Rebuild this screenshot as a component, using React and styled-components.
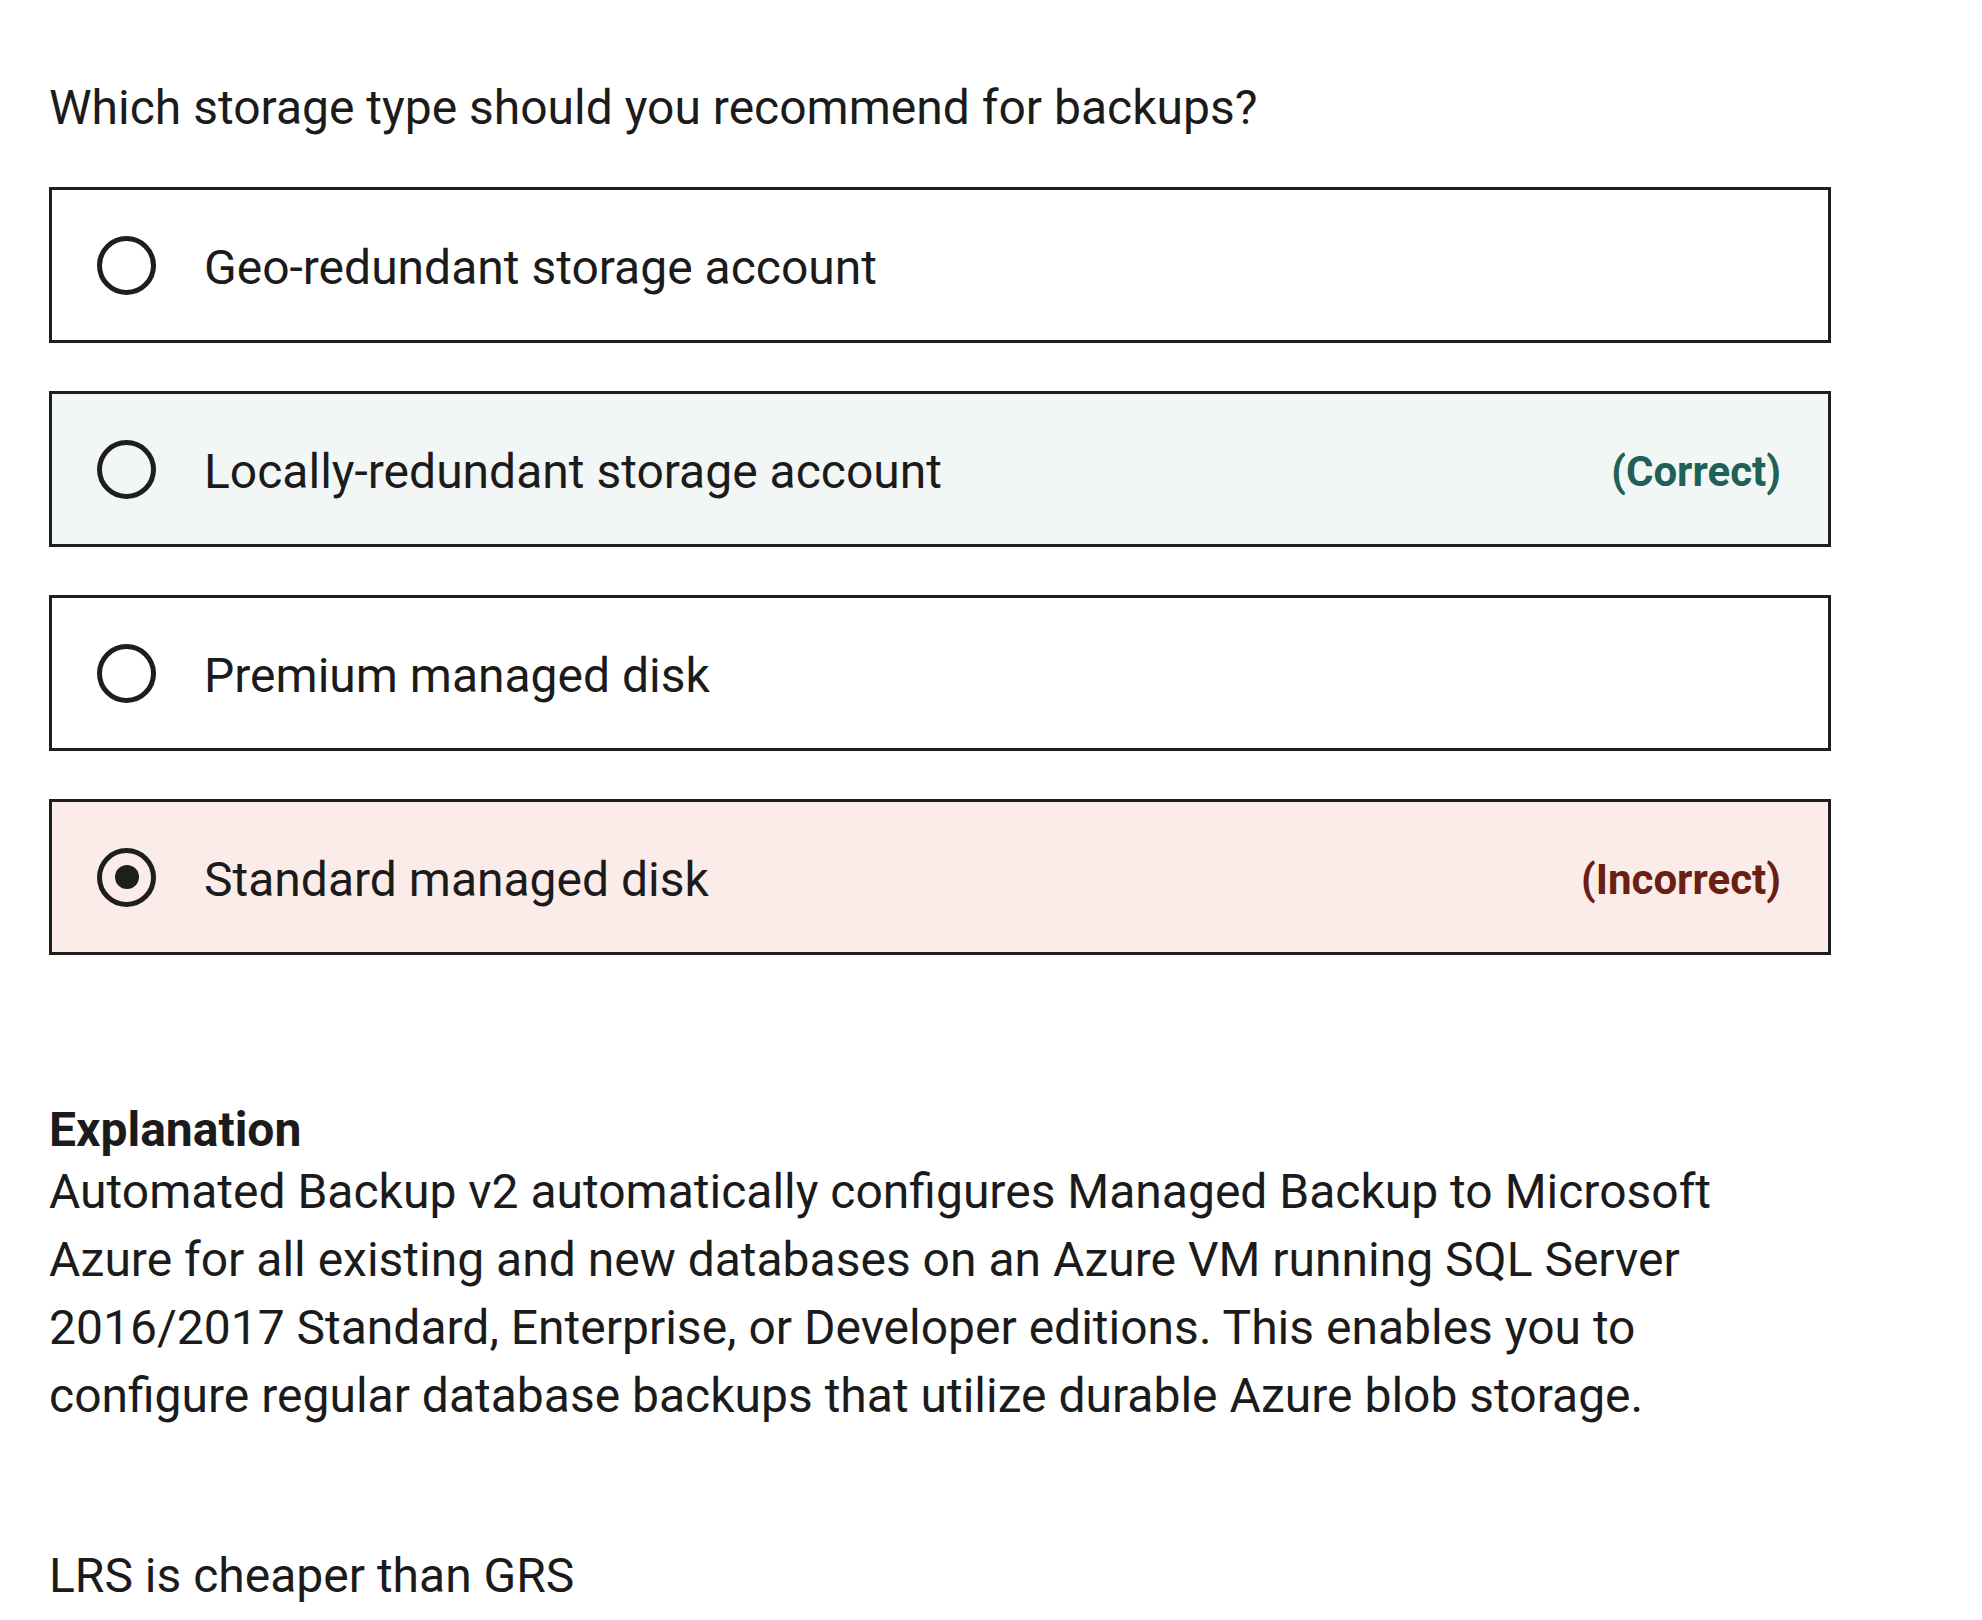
import styled, { createGlobalStyle } from "styled-components";

const GlobalStyle = createGlobalStyle`
  body {
    margin: 0;
    background: #ffffff;
  }
`;

const options = [
  { id: "grs", label: "Geo-redundant storage account" },
  { id: "lrs", label: "Locally-redundant storage account", verdict: "correct" },
  { id: "premium", label: "Premium managed disk" },
  { id: "standard", label: "Standard managed disk", verdict: "incorrect", selected: true },
];

const App = () => {
  return (
    <Page>
      <GlobalStyle />
      <Question>Which storage type should you recommend for backups?</Question>
      <OptionList>
        {options.map((opt) => (
          <Option key={opt.id} $verdict={opt.verdict}>
            <Radio>{opt.selected && <Dot />}</Radio>
            <OptionText>{opt.label}</OptionText>
            {opt.verdict && (
              <Verdict $verdict={opt.verdict}>
                {opt.verdict === "correct" ? "(Correct)" : "(Incorrect)"}
              </Verdict>
            )}
          </Option>
        ))}
      </OptionList>
      <Explanation>
        <Heading>Explanation</Heading>
        <Body>
          Automated Backup v2 automatically configures Managed Backup to Microsoft
          Azure for all existing and new databases on an Azure VM running SQL Server
          2016/2017 Standard, Enterprise, or Developer editions. This enables you to
          configure regular database backups that utilize durable Azure blob storage.
        </Body>
        <Note>LRS is cheaper than GRS</Note>
      </Explanation>
    </Page>
  );
};

export default App;

const Page = styled.div`
  padding: 74px 0 0 49px;
  font-family: Roboto, "Open Sans", sans-serif;
  font-size: 48px;
  line-height: 68px;
  color: #1b1b1b;
`;

const Question = styled.p`
  margin: 0 0 45px;
`;

const OptionList = styled.div`
  display: flex;
  flex-direction: column;
  gap: 48px;
  width: 1782px;
`;

const bgFor = (v) => {
  if (v === "correct") return "#f2f6f5";
  if (v === "incorrect") return "#fbebe9";
  return "#ffffff";
};

const Option = styled.div`
  display: flex;
  align-items: center;
  box-sizing: border-box;
  height: 156px;
  padding: 0 47px 0 45px;
  border: 3px solid #1e1e1e;
  background: ${({ $verdict }) => bgFor($verdict)};
`;

const Radio = styled.span`
  display: grid;
  place-items: center;
  flex-shrink: 0;
  box-sizing: border-box;
  width: 59px;
  height: 59px;
  margin-right: 48px;
  border: 5px solid #1e1e1e;
  border-radius: 50%;
`;

const Dot = styled.span`
  width: 24px;
  height: 24px;
  border-radius: 50%;
  background: #1e1e1e;
`;

const OptionText = styled.span`
  flex: 1;
  padding-top: 5px;
`;

const Verdict = styled.span`
  padding-top: 5px;
  font-size: 42px;
  font-weight: 700;
  color: ${({ $verdict }) => ($verdict === "correct" ? "#1f6157" : "#6a1f12")};
`;

const Explanation = styled.div`
  margin-top: 147px;
`;

const Heading = styled.div`
  font-weight: 700;
  line-height: 56px;
`;

const Body = styled.p`
  margin: 0;
  max-width: 1720px;
`;

const Note = styled.p`
  margin: 112px 0 0;
`;
